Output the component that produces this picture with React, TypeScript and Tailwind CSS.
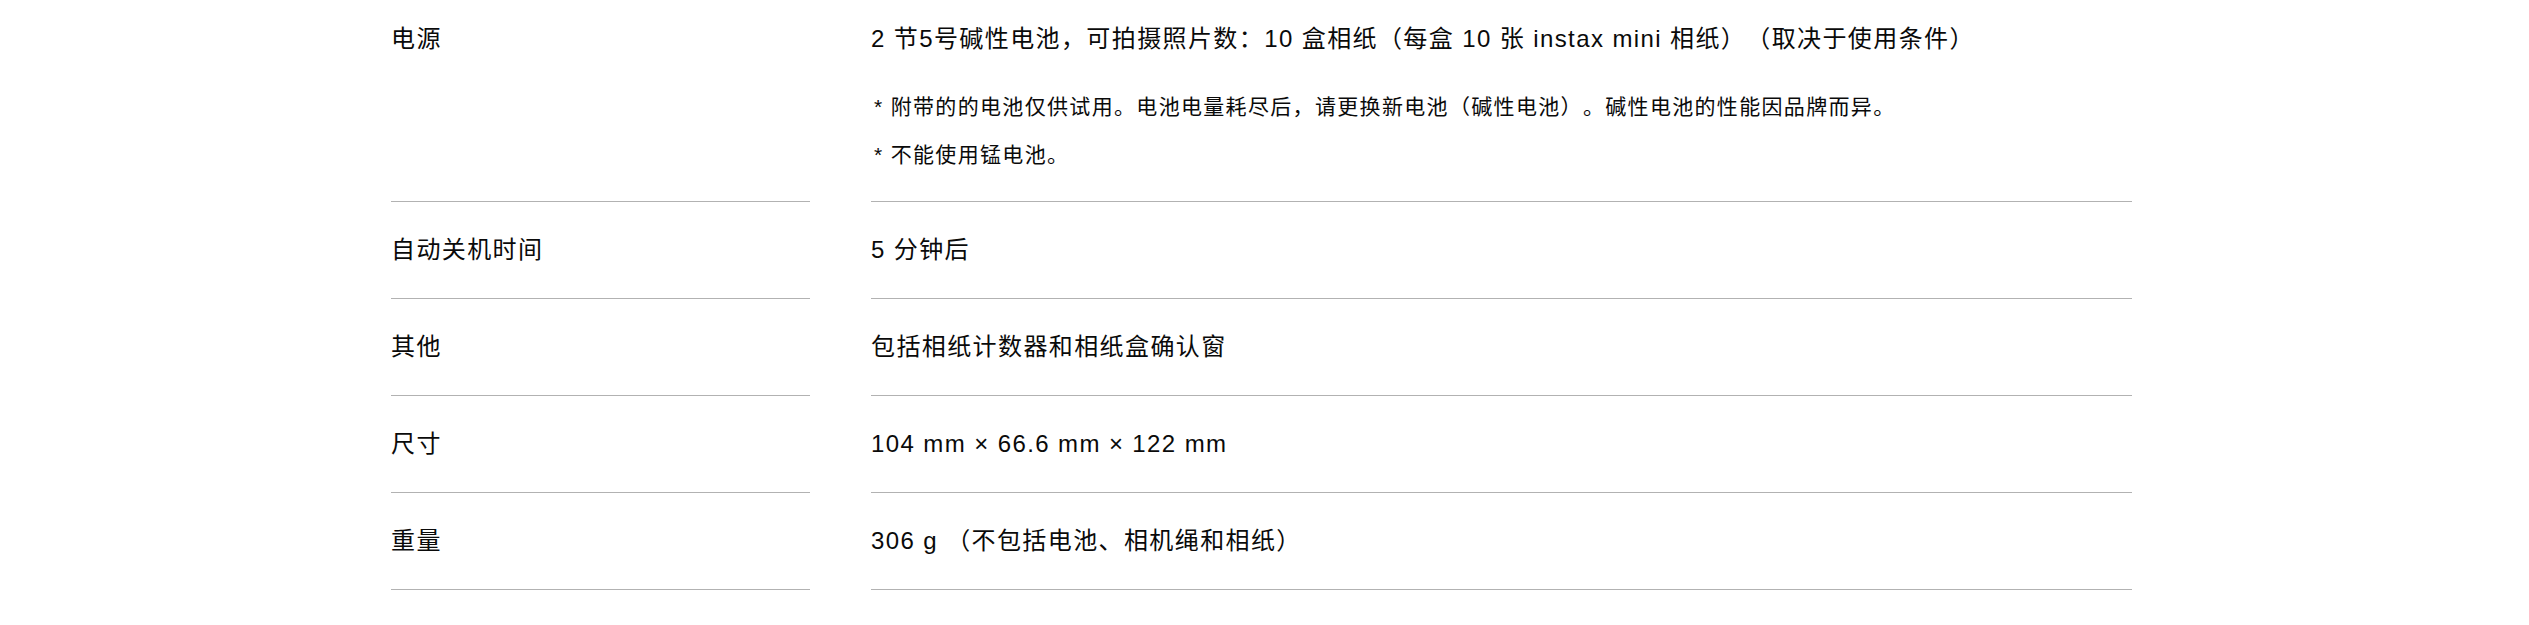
import React from "react";

const rows: { label: string; value: React.ReactNode; notes?: string[] }[] = [
  {
    label: "电源",
    value:
      "2 节5号碱性电池，可拍摄照片数：10 盒相纸（每盒 10 张 instax mini 相纸）（取决于使用条件）",
    notes: [
      "* 附带的的电池仅供试用。电池电量耗尽后，请更换新电池（碱性电池）。碱性电池的性能因品牌而异。",
      "* 不能使用锰电池。",
    ],
  },
  { label: "自动关机时间", value: "5 分钟后" },
  { label: "其他", value: "包括相纸计数器和相纸盒确认窗" },
  { label: "尺寸", value: "104 mm × 66.6 mm × 122 mm" },
  { label: "重量", value: "306 g （不包括电池、相机绳和相纸）" },
];

export default function App() {
  return (
    <div
      className="w-full min-h-[625px] bg-white text-[#0a0a0a] [text-spacing-trim:space-all]"
      style={{ fontFamily: '"Liberation Sans", Arial, "Noto Sans CJK SC", sans-serif' }}
    >
      <div className="ml-[391px] w-[1741px]">
        {rows.map((r, i) => (
          <div key={i} className="grid grid-cols-[419px_1fr] gap-x-[61px]">
            <div
              className={`border-b border-[#b2b2b2] ${i === 0 ? "pt-[21px]" : "pt-[30px]"} pb-[30px] text-[24px] leading-[36px] tracking-[1.4px]`}
            >
              {r.label}
            </div>
            <div
              className={`border-b border-[#b2b2b2] ${i === 0 ? "pt-[21px]" : "pt-[30px]"} pb-[30px]`}
            >
              <div className="text-[24px] leading-[36px] tracking-[1.4px]">{r.value}</div>
              {r.notes && (
                <div className="mt-[34px] flex flex-col gap-[16px]">
                  {r.notes.map((n, j) => (
                    <div key={j} className="text-[21px] leading-[32px] tracking-[1.33px] pl-[3px]">
                      {n}
                    </div>
                  ))}
                </div>
              )}
            </div>
          </div>
        ))}
      </div>
    </div>
  );
}
